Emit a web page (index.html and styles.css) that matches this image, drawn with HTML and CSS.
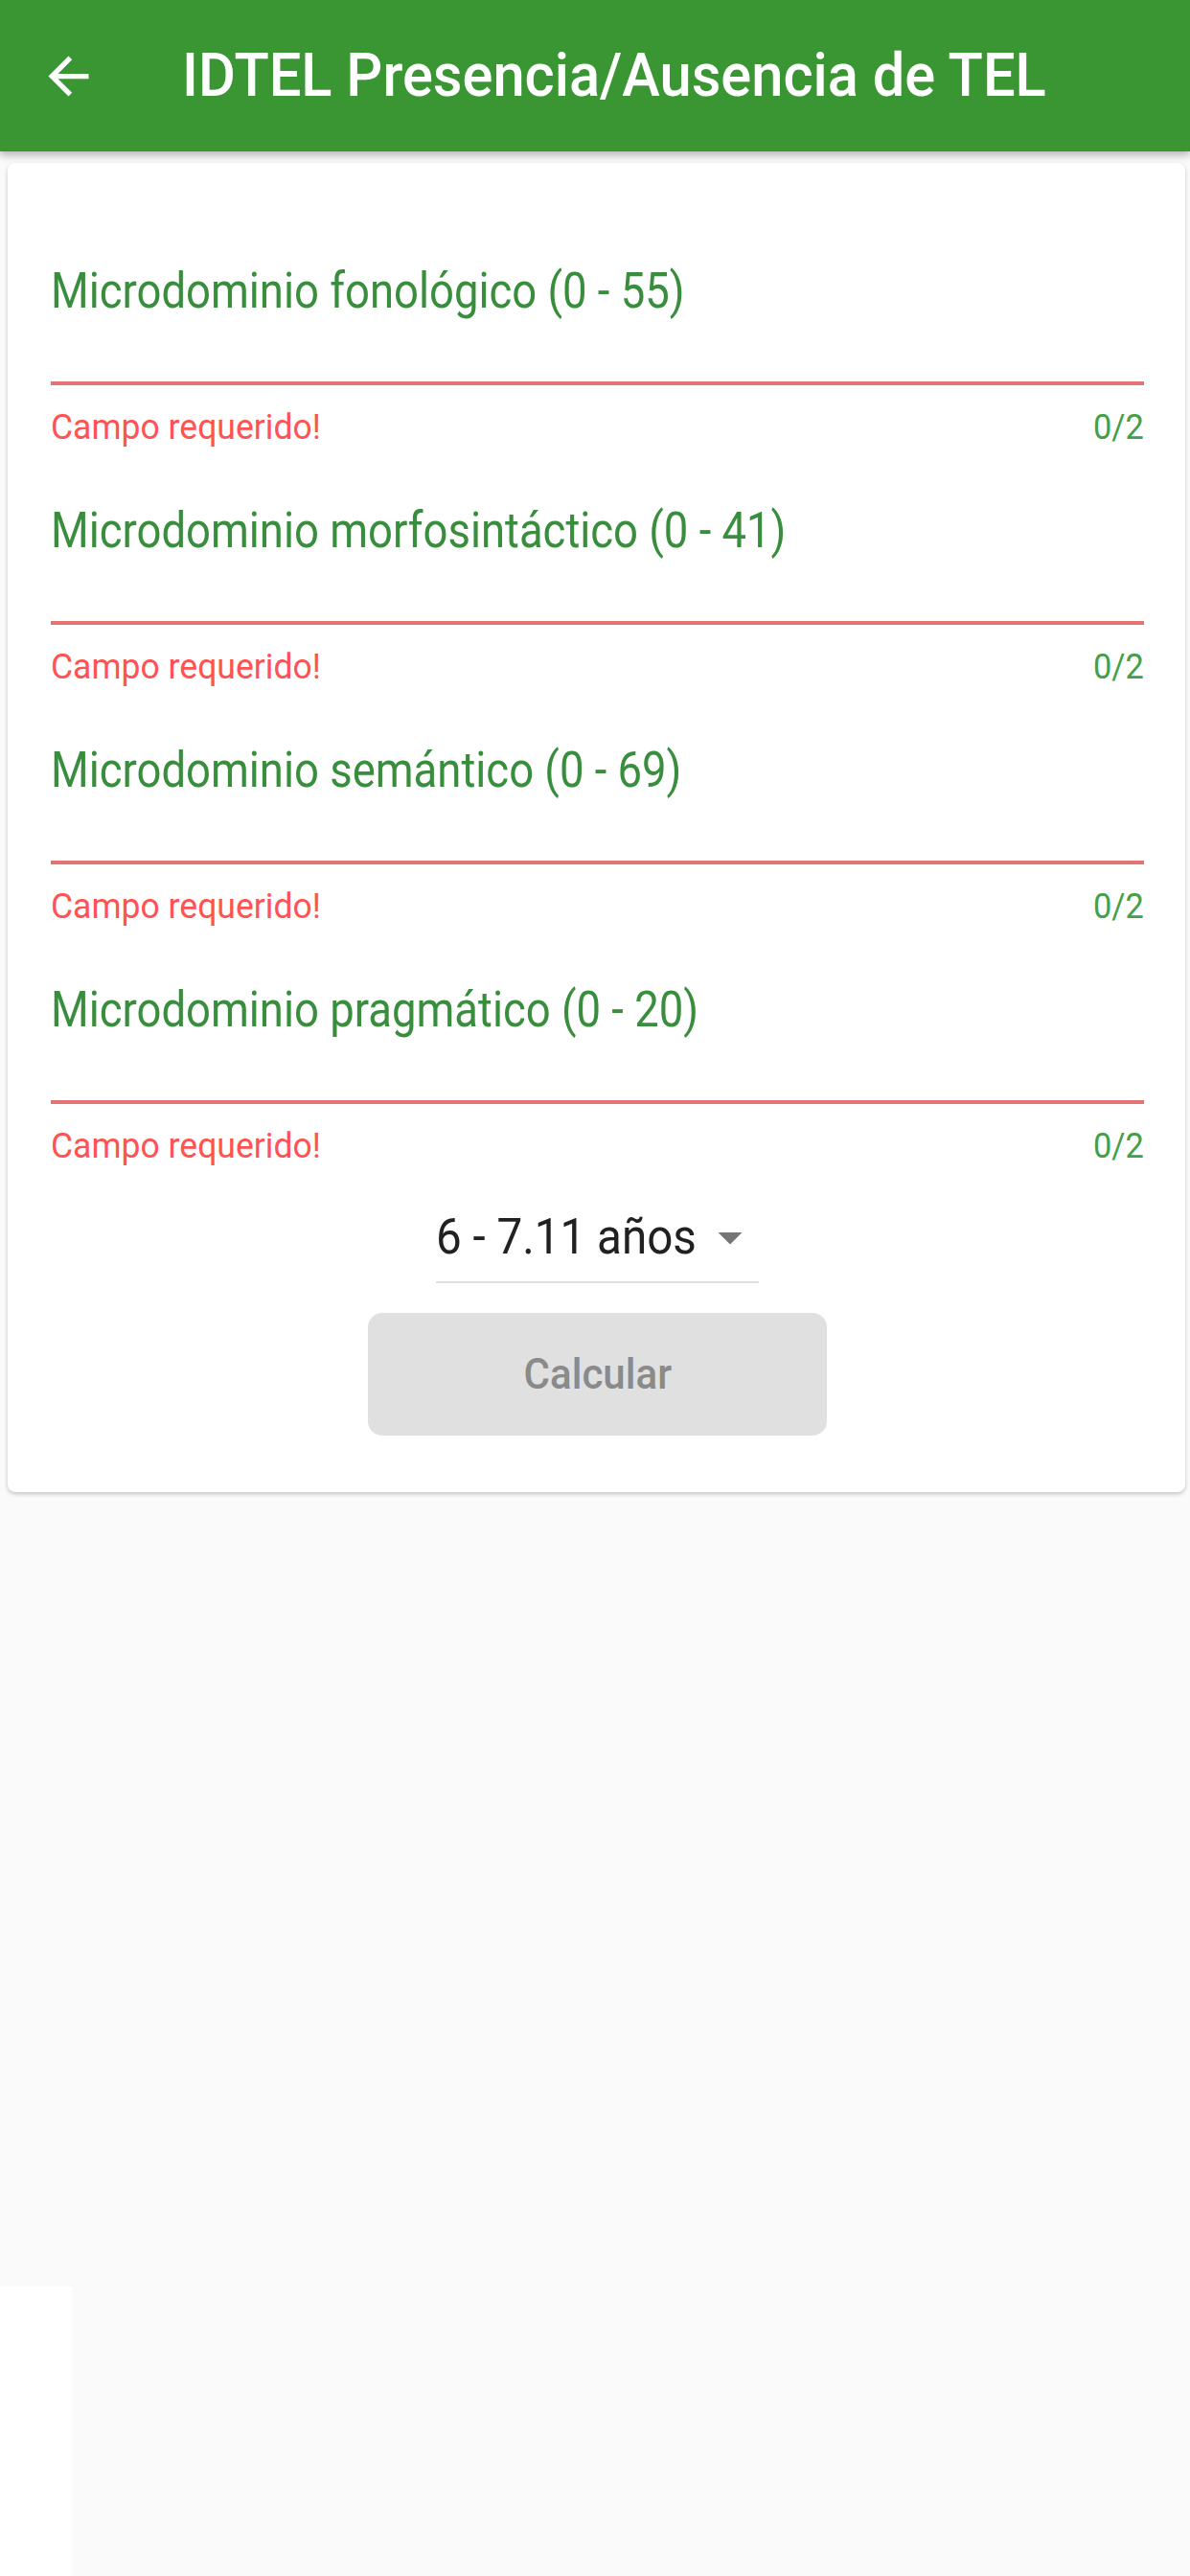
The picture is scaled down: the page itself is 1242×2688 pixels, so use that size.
FILE: index.html
```html
<!DOCTYPE html>
<html lang="es">
<head>
<meta charset="utf-8">
<title>IDTEL Presencia/Ausencia de TEL</title>
<link rel="stylesheet" href="styles.css">
</head>
<body>
<header class="appbar">
  <span class="back-btn" aria-label="Atrás">
    <svg viewBox="0 0 24 24" width="63" height="63"><path fill="#fff" d="M20 11H7.83l5.59-5.59L12 4l-8 8 8 8 1.41-1.41L7.83 13H20v-2z"/></svg>
  </span>
  <h1 class="title"><span class="title-text">IDTEL Presencia/Ausencia de TEL</span></h1>
</header>
<main class="content">
  <section class="card">
    <div class="fields">
      <div class="field">
        <div class="field-label"><span class="label-text">Microdominio fonológico (0 - 55)</span></div>
        <div class="field-line"></div>
        <div class="field-helper"><span class="error">Campo requerido!</span><span class="counter">0/2</span></div>
      </div>
      <div class="field">
        <div class="field-label"><span class="label-text">Microdominio morfosintáctico (0 - 41)</span></div>
        <div class="field-line"></div>
        <div class="field-helper"><span class="error">Campo requerido!</span><span class="counter">0/2</span></div>
      </div>
      <div class="field">
        <div class="field-label"><span class="label-text">Microdominio semántico (0 - 69)</span></div>
        <div class="field-line"></div>
        <div class="field-helper"><span class="error">Campo requerido!</span><span class="counter">0/2</span></div>
      </div>
      <div class="field">
        <div class="field-label"><span class="label-text">Microdominio pragmático (0 - 20)</span></div>
        <div class="field-line"></div>
        <div class="field-helper"><span class="error">Campo requerido!</span><span class="counter">0/2</span></div>
      </div>
    </div>
    <div class="dropdown">
      <div class="dropdown-row">
        <span class="dropdown-value">6 - 7.11 años</span>
        <svg class="dropdown-icon" viewBox="0 0 24 24" width="60" height="60"><path fill="#757575" d="M7 10l5 5 5-5z"/></svg>
      </div>
    </div>
    <button class="calc-btn" disabled><span class="calc-text">Calcular</span></button>
  </section>
</main>
<div class="corner-patch"></div>
</body>
</html>
```

FILE: styles.css
```css
html, body {
  margin: 0;
  padding: 0;
}
body {
  background: #fafafa;
  font-family: Roboto, "Liberation Sans", sans-serif;
  width: 1242px;
  min-height: 2688px;
  position: relative;
  overflow: hidden;
}
.appbar {
  height: 158px;
  background: #3a9633;
  display: flex;
  align-items: center;
  box-shadow: 0 4px 8px rgba(0, 0, 0, 0.28);
  position: relative;
  z-index: 2;
}
.back-btn {
  width: 63px;
  height: 63px;
  margin-left: 40px;
  display: flex;
}
.title {
  margin: 0 0 0 87px;
  color: #fff;
  font-size: 63px;
  font-weight: 500;
  line-height: 74px;
  letter-spacing: 0;
  white-space: nowrap;
}
.title-text {
  display: inline-block;
  transform: scaleX(0.946);
  transform-origin: left center;
}
.content {
  padding: 12px 5px 0 8px;
}
.card {
  background: #fff;
  border-radius: 8px;
  box-shadow: 0 2px 4px rgba(0, 0, 0, 0.22);
  padding: 104px 43px 59px 45px;
  display: flex;
  flex-direction: column;
}
.fields {
  display: flex;
  flex-direction: column;
  gap: 57px;
}
.field-label {
  color: #388e3c;
  font-size: 52px;
  line-height: 60px;
  white-space: nowrap;
}
.label-text {
  display: inline-block;
  transform: scaleX(0.874);
  transform-origin: left center;
}
.field-line {
  height: 4px;
  background: #e57373;
  margin-top: 64px;
}
.field-helper {
  display: flex;
  justify-content: space-between;
  margin-top: 23px;
  font-size: 37px;
  line-height: 42px;
}
.error {
  color: #ff5252;
  display: inline-block;
  transform: scaleX(0.96);
  transform-origin: left center;
}
.counter {
  color: #43a047;
  display: inline-block;
  transform: scaleX(0.93);
  transform-origin: right center;
}
.dropdown {
  align-self: center;
  margin-top: 44px;
  border-bottom: 2px solid #e0e0e0;
  padding-bottom: 16px;
}
.dropdown-row {
  display: flex;
  align-items: center;
  gap: 4px;
}
.dropdown-value {
  color: #212121;
  font-size: 52px;
  line-height: 60px;
  display: inline-block;
  white-space: nowrap;
  transform: scaleX(0.915);
  transform-origin: left center;
  margin-right: -25px;
}
.dropdown-icon {
  display: block;
}
.calc-btn {
  align-self: center;
  margin-top: 31px;
  width: 479px;
  height: 128px;
  border: none;
  border-radius: 15px;
  background: #e0e0e0;
  color: #8a8a8a;
  font-family: Roboto, "Liberation Sans", sans-serif;
  font-size: 44px;
  font-weight: 500;
  padding: 0;
}
.calc-text {
  display: inline-block;
  transform: scaleX(0.956);
}
.corner-patch {
  position: absolute;
  left: 0;
  top: 2386px;
  width: 75px;
  height: 302px;
  background: #fff;
}
```
